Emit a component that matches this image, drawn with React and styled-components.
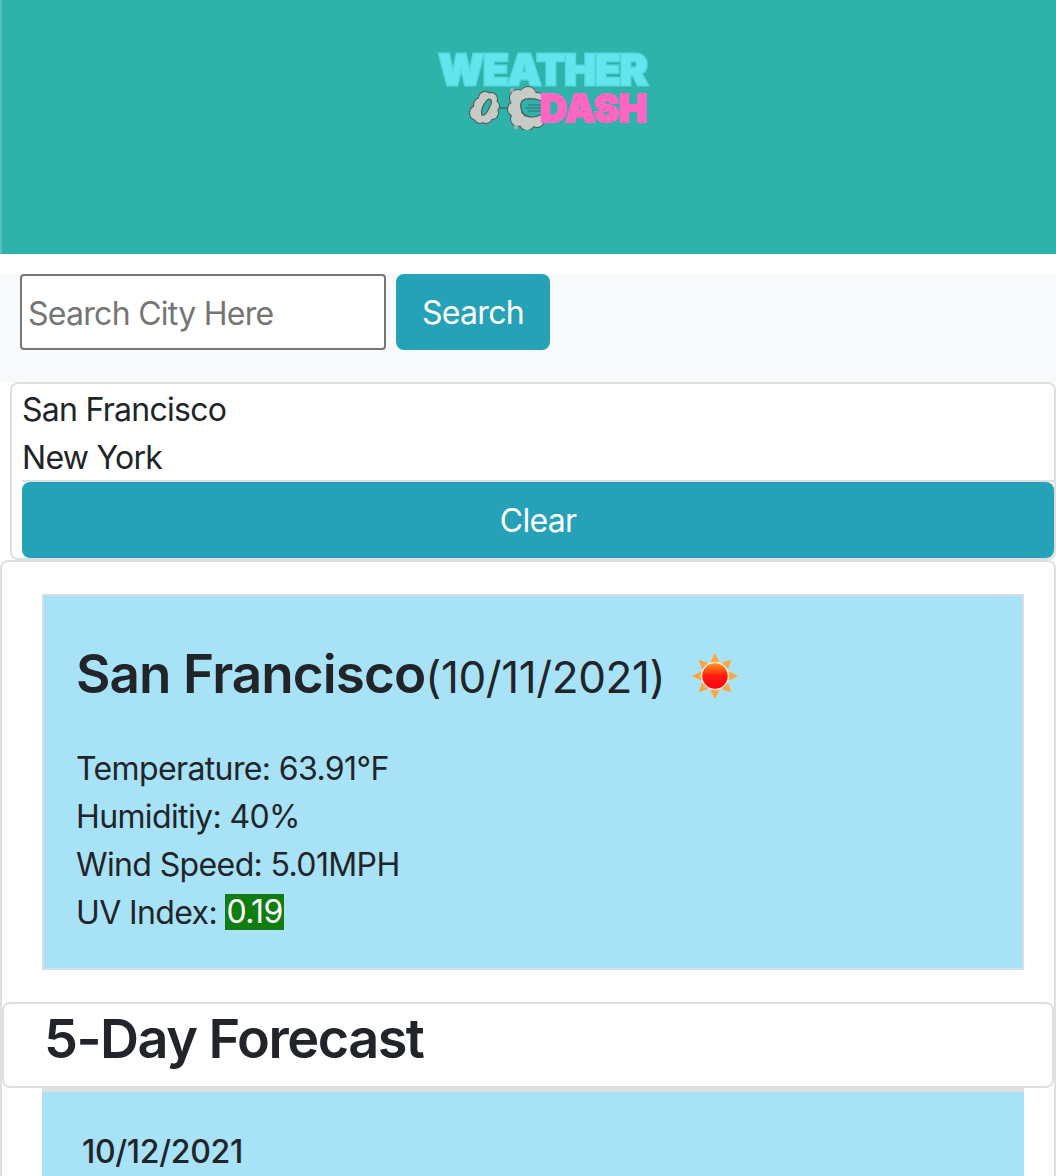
import React from "react";
import styled, { createGlobalStyle } from "styled-components";

const Global = createGlobalStyle`
  html, body { margin: 0; padding: 0; background: #fff; }
  * { box-sizing: border-box; }
  body { font-family: Inter, "Liberation Sans", sans-serif; color: #212529; }
`;
const Page = styled.div`
  width: 1056px; height: 1176px; overflow: hidden; font-size: 32px; line-height: 48px; letter-spacing: -0.72px;
`;
const Header = styled.header`
  height: 254px; background: #2db3aa; border-left: 2px solid #5cbfb8; display: flex; justify-content: center; padding: 51px 0 0 30px;
`;
const Logo = styled.div`
  width: 210px; height: 76px; display: flex; flex-direction: column; align-items: flex-end; filter: blur(0.6px);
`;
const LogoTop = styled.div`
  font: 900 42px/38px Inter, sans-serif; color: #62e6ee; letter-spacing: -0.9px; -webkit-text-stroke: 3px #5ad8df; paint-order: stroke fill; white-space: nowrap; margin-right: 2px;
`;
const LogoBottom = styled.div`
  display: flex; align-items: center; height: 38px; margin-right: 2px;
`;
const Dash = styled.span`
  font: 900 38px/38px Inter, sans-serif; color: #ff66c4; letter-spacing: -0.4px; -webkit-text-stroke: 2px #ff66c4; margin-left: -8px;
`;
const SearchBar = styled.section`
  margin-top: 20px; height: 108px; background: #f8f9fa; display: flex; align-items: flex-start; gap: 10px; padding-left: 20px;
`;
const SearchInput = styled.input`
  width: 366px; height: 76px; border: 2px solid #767676; border-radius: 4px; padding: 2px 6px 0; background: #fff;
  font: inherit; letter-spacing: inherit; color: #212529;
  &::placeholder { color: #757575; opacity: 1; }
`;
const Btn = styled.button`
  height: 76px; border: 0; border-radius: 8px; background: #25a2b8; color: #fff; font: inherit; letter-spacing: inherit;
  width: ${p => (p.$full ? "1032px" : "154px")}; padding: 2px 0 0; display: block;
`;
const History = styled.section`
  margin-left: 10px; height: 178px; border: 2px solid #dfdfdf; border-radius: 8px; padding-left: 10px; background: #fff;
`;
const CityList = styled.ul`
  list-style: none; margin: 0; padding: 2px 0 0; height: 98px; border-bottom: 2px solid #dfdfdf;
`;
const City = styled.li``;
const Main = styled.section`
  height: 620px; border: 2px solid #dfdfdf; border-bottom: 0; border-radius: 8px 8px 0 0; background: #fff; padding-top: 32px;
`;
const Today = styled.div`
  width: 982px; height: 376px; margin-left: 40px; border: 2px solid #d6dfe4; background: #a8e2f6; padding: 38px 0 0 32px;
`;
const TodayHead = styled.div`
  display: flex; align-items: center; height: 80px; margin-bottom: 31px;
`;
const CityName = styled.h2`
  margin: 0; font-size: 53px; font-weight: 600; line-height: 76px; letter-spacing: -0.9px;
`;
const DateText = styled.span`
  font-size: 44px; margin-top: 6px; letter-spacing: -0.4px;
`;
const Sun = styled.svg`
  width: 46px; height: 46px; margin-left: 27px; margin-top: 4px;
`;
const Stat = styled.div`
  letter-spacing: -0.62px;
`;
const Badge = styled.span`
  display: inline-block; height: 36px; line-height: 36px; background: #107d10; color: #fff; vertical-align: 1px; padding: 0 1px;
`;
const ForecastBar = styled.div`
  margin: 32px 0 0 0; width: 1052px; height: 86px; border: 2px solid #dfdfdf; border-radius: 8px; background: #fff; padding-left: 40px;
`;
const ForecastTitle = styled.h3`
  margin: 0; font-size: 54px; font-weight: 600; line-height: 70px; letter-spacing: -1.5px;
`;
const DayCard = styled.div`
  width: 982px; margin-left: 40px; height: 90px; border-top: 4px solid #dfdfdf; background: #a8e2f6; padding: 40px 0 0 40px;
  font-weight: 500; line-height: 40px; letter-spacing: -0.3px;
`;

const rays = [0, 45, 90, 135, 180, 225, 270, 315];
const SunIcon = () => (
  <Sun viewBox="0 0 46 46">
    <defs>
      <linearGradient id="sunFill" x1="0" y1="0" x2="0" y2="1">
        <stop offset="0" stopColor="#ff9d1c" />
        <stop offset="0.5" stopColor="#ff1a10" />
        <stop offset="1" stopColor="#ff0016" />
      </linearGradient>
    </defs>
    {rays.map(a => (
      <polygon key={a} points="23,0 27.5,9 18.5,9" fill="#fba63e" transform={`rotate(${a} 23 23)`} />
    ))}
    <circle cx="23" cy="23" r="13.5" fill="url(#sunFill)" stroke="#ffe6c8" strokeWidth="1.6" />
  </Sun>
);

const leftLumps = [[9, 27, 7], [13, 19, 7], [17, 12, 6], [23, 13, 6], [26, 20, 5], [24, 27, 6], [18, 31, 6], [12, 32, 5]];
const rightLumps = [[50, 12, 8], [60, 9, 8], [69, 14, 7], [72, 24, 7], [69, 34, 7], [59, 37, 7], [50, 33, 7], [47, 23, 7]];
const Clouds = () => (
  <svg width="80" height="44" viewBox="0 0 80 44">
    <line x1="30" y1="22" x2="46" y2="22" stroke="#244f4b" strokeWidth="1" />
    {[...leftLumps, ...rightLumps].map(([x, y, r], i) => (
      <circle key={i} cx={x} cy={y} r={r + 1} fill="#4f5a56" />
    ))}
    {[...leftLumps, ...rightLumps].map(([x, y, r], i) => (
      <circle key={i} cx={x} cy={y} r={r} fill="#c6cbc6" />
    ))}
    <path d="M14 29 C12 24 17 15 21 13 C24 13 24 17 22 20 C20 25 17 30 14 29Z" fill="#2db3aa" stroke="#4e5b57" strokeWidth="1.2" />
    <path d="M54 15 C59 11 68 13 74 15 L74 28 C68 32 60 32 56 28 C52 24 52 18 54 15Z" fill="#2db3aa" stroke="#4e5b57" strokeWidth="1.2" />
    <path d="M60 19h15M58 22h17M60 25h15" stroke="#3f6b68" strokeWidth="1" />
    <circle cx="3" cy="19" r="1.6" fill="#7d8884" />
    <circle cx="20" cy="41" r="1.6" fill="#7d8884" />
    <circle cx="44" cy="4" r="2" fill="#aab0ac" />
    <circle cx="48" cy="41" r="2.2" fill="#aab0ac" />
  </svg>
);

export default function App() {
  return (
    <Page>
      <Global />
      <Header>
        <Logo>
          <LogoTop>WEATHER</LogoTop>
          <LogoBottom>
            <Clouds />
            <Dash>DASH</Dash>
          </LogoBottom>
        </Logo>
      </Header>
      <SearchBar>
        <SearchInput placeholder="Search City Here" />
        <Btn>Search</Btn>
      </SearchBar>
      <History>
        <CityList>
          <City>San Francisco</City>
          <City>New York</City>
        </CityList>
        <Btn $full>Clear</Btn>
      </History>
      <Main>
        <Today>
          <TodayHead>
            <CityName>San Francisco</CityName>
            <DateText>(10/11/2021)</DateText>
            <SunIcon />
          </TodayHead>
          <Stat>Temperature: 63.91°F</Stat>
          <Stat>Humiditiy: 40%</Stat>
          <Stat>Wind Speed: 5.01MPH</Stat>
          <Stat>UV Index: <Badge>0.19</Badge></Stat>
        </Today>
        <ForecastBar>
          <ForecastTitle>5-Day Forecast</ForecastTitle>
        </ForecastBar>
        <DayCard>10/12/2021</DayCard>
      </Main>
    </Page>
  );
}
